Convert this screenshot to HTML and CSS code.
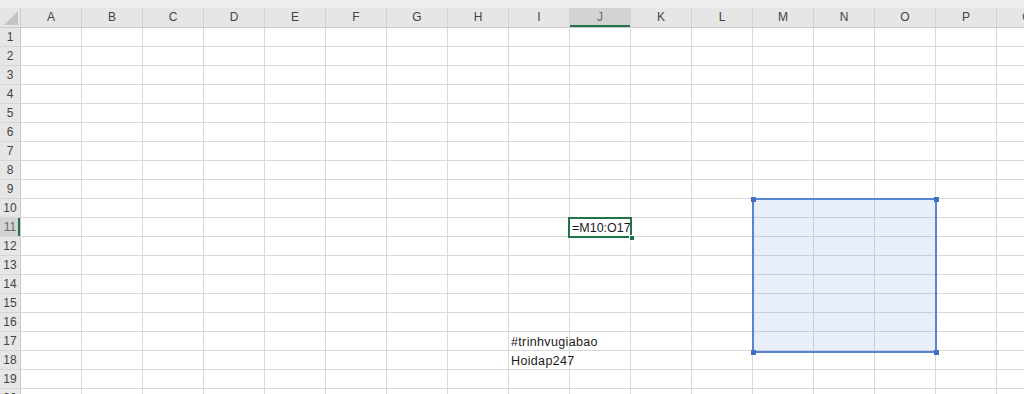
FILE: index.html
```html
<!DOCTYPE html>
<html>
<head>
<meta charset="utf-8">
<link rel="stylesheet" href="styles.css">
</head>
<body>
<div class="sheet">
  <div class="topband"></div>
  <div class="colheads">
    <div class="corner">
      <svg class="corner-tri" width="14" height="14" viewBox="0 0 14 14"><polygon points="14,0 14,14 0,14" fill="#c4c4c4"/></svg>
    </div>
    <div class="colhead">A</div>
    <div class="colhead">B</div>
    <div class="colhead">C</div>
    <div class="colhead">D</div>
    <div class="colhead">E</div>
    <div class="colhead">F</div>
    <div class="colhead">G</div>
    <div class="colhead">H</div>
    <div class="colhead">I</div>
    <div class="colhead sel">J</div>
    <div class="colhead">K</div>
    <div class="colhead">L</div>
    <div class="colhead">M</div>
    <div class="colhead">N</div>
    <div class="colhead">O</div>
    <div class="colhead">P</div>
    <div class="colhead">Q</div>
  </div>
  <div class="main">
    <div class="rowheads">
      <div class="rowhead">1</div>
      <div class="rowhead">2</div>
      <div class="rowhead">3</div>
      <div class="rowhead">4</div>
      <div class="rowhead">5</div>
      <div class="rowhead">6</div>
      <div class="rowhead">7</div>
      <div class="rowhead">8</div>
      <div class="rowhead">9</div>
      <div class="rowhead">10</div>
      <div class="rowhead sel">11</div>
      <div class="rowhead">12</div>
      <div class="rowhead">13</div>
      <div class="rowhead">14</div>
      <div class="rowhead">15</div>
      <div class="rowhead">16</div>
      <div class="rowhead">17</div>
      <div class="rowhead">18</div>
      <div class="rowhead">19</div>
      <div class="rowhead">20</div>
    </div>
    <div class="cells">
      <div class="range">
        <span class="handle tl"></span>
        <span class="handle tr"></span>
        <span class="handle bl"></span>
        <span class="handle br"></span>
      </div>
      <div class="active">=M10:O17</div>
      <div class="text t17">#trinhvugiabao</div>
      <div class="text t18">Hoidap247</div>
    </div>
  </div>
</div>
</body>
</html>
```
FILE: styles.css
```css
html, body {
  margin: 0;
  padding: 0;
  background: #ffffff;
  overflow: hidden;
}
body {
  width: 1024px;
  height: 394px;
  font-family: "Liberation Sans", Arial, sans-serif;
}
.sheet {
  display: flex;
  flex-direction: column;
  width: 1058px;
}
.topband {
  height: 8px;
  background: #ededed;
}
.colheads {
  display: flex;
  height: 20px;
  box-sizing: border-box;
  background: #e6e6e6;
  border-bottom: 1px solid #c9c9c9;
}
.corner {
  width: 21px;
  flex: none;
  box-sizing: border-box;
  border-right: 1px solid #cfcfcf;
  display: flex;
  align-items: flex-end;
  justify-content: flex-end;
  padding: 0 2px 2px 0;
}
.corner-tri {
  display: block;
}
.colhead {
  width: 61px;
  flex: none;
  box-sizing: border-box;
  border-right: 1px solid #d2d2d2;
  text-align: center;
  font-size: 12px;
  line-height: 19px;
  color: #444444;
}
.colhead.sel {
  background: #d3d3d3;
  color: #6a6a6a;
  box-shadow: inset 0 -2px 0 #217346;
}
.main {
  display: flex;
}
.rowheads {
  width: 21px;
  flex: none;
  display: flex;
  flex-direction: column;
}
.rowhead {
  height: 19px;
  box-sizing: border-box;
  background: #e6e6e6;
  border-right: 1px solid #c9c9c9;
  border-bottom: 1px solid #d6d6d6;
  text-align: center;
  font-size: 12px;
  line-height: 18px;
  color: #444444;
}
.rowhead.sel {
  background: #d3d3d3;
  color: #6a6a6a;
  box-shadow: inset -2px 0 0 #217346;
}
.cells {
  display: grid;
  grid-template-columns: repeat(17, 61px);
  grid-template-rows: repeat(20, 19px);
  background-color: #ffffff;
  background-image:
    linear-gradient(to right, transparent 60px, #d9d9d9 60px),
    linear-gradient(to bottom, transparent 18px, #d9d9d9 18px);
  background-size: 61px 100%, 100% 19px;
}
.range {
  grid-column: 13 / 16;
  grid-row: 10 / 18;
  position: relative;
  margin: -1px -1px -2px -1px;
  border: 2px solid #5685d2;
  background: rgba(80, 130, 210, 0.13);
}
.handle {
  position: absolute;
  width: 5px;
  height: 5px;
  background: #3f6fc0;
}
.handle.tl { left: -3.5px; top: -3.5px; }
.handle.tr { right: -3.5px; top: -3.5px; }
.handle.bl { left: -3.5px; bottom: -3.5px; }
.handle.br { right: -3.5px; bottom: -3.5px; }
.active {
  grid-column: 10;
  grid-row: 11;
  position: relative;
  margin: -1px -1px -1px -2px;
  border: 2px solid #217346;
  background: #ffffff;
  padding-left: 2px;
  font-size: 12.5px;
  line-height: 18px;
  color: #1a1a1a;
  white-space: nowrap;
}
.active::after {
  content: "";
  position: absolute;
  right: -5px;
  bottom: -5px;
  width: 4px;
  height: 4px;
  background: #217346;
  border: 1px solid #ffffff;
}
.text {
  grid-column: 9;
  padding: 2px 0 0 2px;
  font-size: 12.5px;
  line-height: 17px;
  letter-spacing: 0.35px;
  color: #1a1a1a;
  white-space: nowrap;
}
.t17 { grid-row: 17; }
.t18 { grid-row: 18; }
```
